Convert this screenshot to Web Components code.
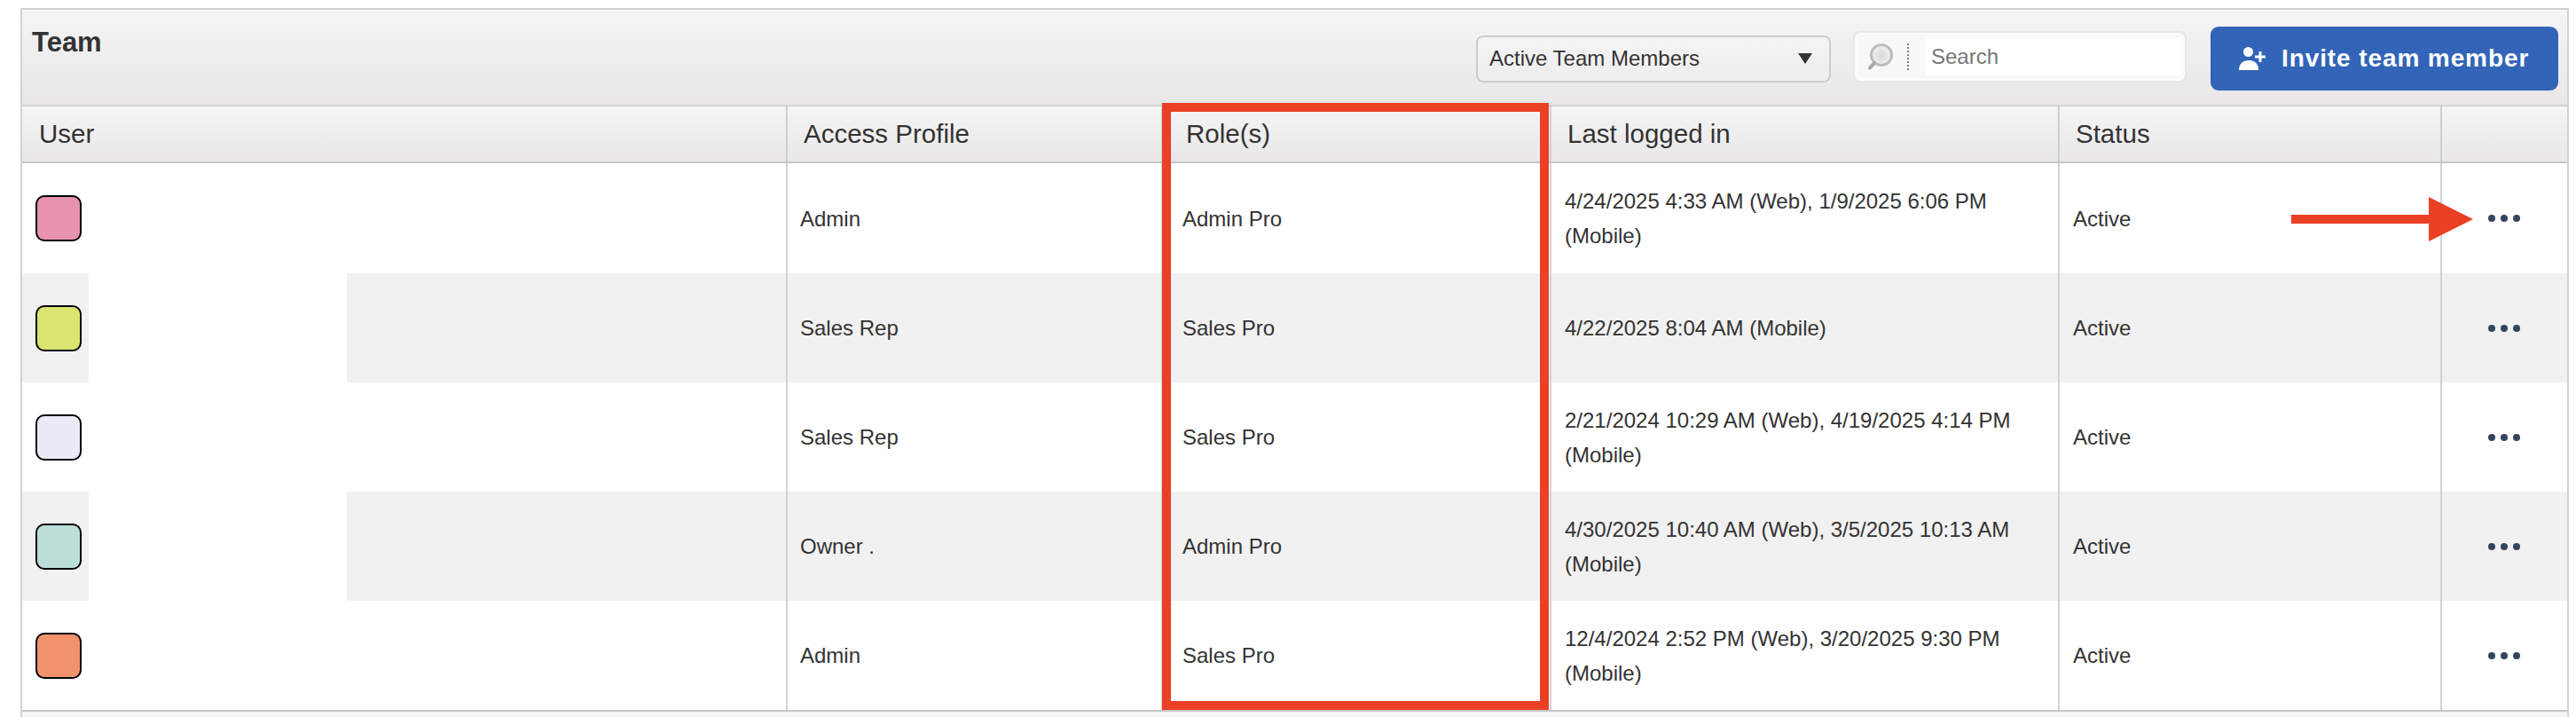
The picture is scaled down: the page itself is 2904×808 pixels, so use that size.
<!DOCTYPE html>
<html>
<head>
<meta charset="utf-8">
<title>Team</title>
<style>
	html, body { margin: 0; background: #ffffff; }
	body {
		padding: 9px 8px 0 23px;
		height: 799px;
		overflow: hidden;
		font-family: "Liberation Sans", Arial, sans-serif;
		color: #333333;
	}
	team-head + team-row { height: 124px; }
</style>
</head>
<body>
<team-panel>
	<span slot="title">Team</span>
	<member-select slot="tools">Active Team Members</member-select>
	<search-box slot="tools"></search-box>
	<invite-button slot="tools">Invite team member</invite-button>

	<team-head></team-head>
	<team-row swatch="#e893ae" access="Admin" role-name="Admin Pro" last="4/24/2025 4:33 AM (Web), 1/9/2025 6:06 PM (Mobile)"></team-row>
	<team-row swatch="#dae46f" access="Sales Rep" role-name="Sales Pro" last="4/22/2025 8:04 AM (Mobile)" alt></team-row>
	<team-row swatch="#e9ebf6" access="Sales Rep" role-name="Sales Pro" last="2/21/2024 10:29 AM (Web), 4/19/2025 4:14 PM (Mobile)"></team-row>
	<team-row swatch="#bcded9" access="Owner ." role-name="Admin Pro" last="4/30/2025 10:40 AM (Web), 3/5/2025 10:13 AM (Mobile)" alt></team-row>
	<team-row swatch="#f2926d" access="Admin" role-name="Sales Pro" last="12/4/2024 2:52 PM (Web), 3/20/2025 9:30 PM (Mobile)"></team-row>

	<mark-box slot="marks"></mark-box>
	<mark-arrow slot="marks"></mark-arrow>
</team-panel>

<script>
const COLUMNS = '863px 423px 438px 573px 431px 141px';

class TeamPanel extends HTMLElement {
	constructor() {
		super();
		this.attachShadow({ mode: 'open' });
		this.shadowRoot.innerHTML = `
<style>
	:host {
		display: block;
		position: relative;
		box-sizing: border-box;
		width: 2873px;
		height: 799px;
		border: solid #d2d2d2;
		border-width: 2px 2px 0 2px;
		background: #f4f4f4;
	}
	.bar {
		display: flex;
		align-items: flex-start;
		box-sizing: border-box;
		height: 109px;
		padding: 19px 10px 0 11px;
		background: linear-gradient(#f5f5f5, #e9e7e8);
		border-bottom: 2px solid #d2d2d2;
	}
	.title {
		font-size: 31px;
		font-weight: bold;
		line-height: 36px;
		color: #333333;
	}
	.tools {
		display: flex;
		align-items: center;
		margin-left: auto;
		height: 72px;
	}
	.rows {
		border-bottom: 2px solid #c6c6c6;
	}
</style>
<div class="bar">
	<div class="title"><slot name="title"></slot></div>
	<div class="tools"><slot name="tools"></slot></div>
</div>
<div class="rows"><slot></slot></div>
<slot name="marks"></slot>`;
	}
}

class MemberSelect extends HTMLElement {
	constructor() {
		super();
		this.attachShadow({ mode: 'open' });
		this.shadowRoot.innerHTML = `
<style>
	:host {
		display: flex;
		align-items: center;
		justify-content: space-between;
		box-sizing: border-box;
		width: 400px;
		height: 53px;
		padding: 0 19px 0 13px;
		border: 2px solid #cccccc;
		border-radius: 8px;
		background: linear-gradient(#f4f4f4, #eeeded);
		font-size: 24px;
		color: #333333;
	}
	svg { display: block; }
</style>
<slot></slot>
<svg width="16" height="12" viewBox="0 0 16 12"><path d="M0 0H16L8 12Z" fill="#333333"/></svg>`;
	}
}

class SearchBox extends HTMLElement {
	constructor() {
		super();
		this.attachShadow({ mode: 'open' });
		this.shadowRoot.innerHTML = `
<style>
	:host {
		display: flex;
		align-items: center;
		box-sizing: border-box;
		width: 376px;
		height: 58px;
		margin: -5px 27px 0 25px;
		border: 2px solid #e9e8e8;
		border-radius: 8px;
		background: #f8f8f8;
		box-shadow: inset 0 0 0 3px #fbfbfb;
	}
	svg { display: block; margin-left: 14px; flex: none; }
	.sep {
		width: 0;
		height: 30px;
		margin-left: 15px;
		border-left: 2px dotted #7f7f7f;
	}
	.field {
		flex: 1;
		align-self: stretch;
		margin: 6px 3px 6px 19px;
		padding-left: 6px;
		background: #ffffff;
		font-size: 24px;
		line-height: 42px;
		color: #777777;
	}
</style>
<svg width="30" height="30" viewBox="0 0 30 30">
	<defs>
		<radialGradient id="lens">
			<stop offset="0" stop-color="#d6d6d6"/>
			<stop offset="1" stop-color="#f3f3f3"/>
		</radialGradient>
	</defs>
	<circle cx="16" cy="13" r="11.5" fill="url(#lens)" stroke="#bdbdbd" stroke-width="3"/>
	<path d="M8 22L3 27.5" stroke="#a8a8a8" stroke-width="4" stroke-linecap="round"/>
</svg>
<span class="sep"></span>
<span class="field">Search</span>`;
	}
}

class InviteButton extends HTMLElement {
	constructor() {
		super();
		this.attachShadow({ mode: 'open' });
		this.shadowRoot.innerHTML = `
<style>
	:host {
		display: flex;
		align-items: center;
		box-sizing: border-box;
		width: 392px;
		height: 72px;
		padding-left: 32px;
		border-radius: 9px;
		background: #3264b8;
		color: #ffffff;
		font-size: 28px;
		font-weight: bold;
		letter-spacing: 0.9px;
	}
	svg { display: block; margin-right: 18px; flex: none; }
</style>
<svg width="30" height="26" viewBox="0 0 30 26" fill="#ffffff">
	<circle cx="10.5" cy="5.5" r="5.5"/>
	<path d="M0 26C0 19 4 15 11 15C18 15 22 19 22 26Z"/>
	<path d="M22.5 9.5H18V12.5H22.5V17H25.5V12.5H30V9.5H25.5V5H22.5Z"/>
</svg>
<slot></slot>`;
	}
}

class TeamHead extends HTMLElement {
	constructor() {
		super();
		this.attachShadow({ mode: 'open' });
		this.shadowRoot.innerHTML = `
<style>
	:host {
		display: grid;
		grid-template-columns: ${COLUMNS};
		height: 64px;
		box-sizing: border-box;
		border-bottom: 2px solid #c6c6c6;
		background: linear-gradient(#f5f5f5, #e9e7e8);
		font-size: 29.5px;
		color: #333333;
	}
	div {
		box-sizing: border-box;
		padding-left: 18px;
		line-height: 62px;
		border-right: 2px solid #cfcfcf;
	}
	div:first-of-type { padding-left: 19px; }
	div:nth-of-type(3) { padding-left: 26px; }
	div:last-child { border-right: 0; }
</style>
<div>User</div><div>Access Profile</div><div>Role(s)</div><div>Last logged in</div><div>Status</div><div></div>`;
	}
}

const rowTemplate = document.createElement('template');
rowTemplate.innerHTML = `
<style>
	:host {
		display: grid;
		grid-template-columns: ${COLUMNS};
		height: 123px;
		background: #ffffff;
		font-size: 24px;
		line-height: 39px;
		color: #333333;
	}
	:host([alt]) { background: #f1f1f1; }
	.cell {
		display: flex;
		align-items: center;
		box-sizing: border-box;
		padding: 0 15px;
		border-right: 2px solid #d2d2d2;
	}
	.access { padding-left: 14px; }
	.role { padding-left: 22px; }
	.user { padding: 0; align-items: stretch; }
	.thumb {
		display: flex;
		align-items: center;
		flex: none;
		box-sizing: border-box;
		width: 75px;
		padding-left: 15px;
	}
	.swatch {
		width: 52px;
		height: 52px;
		box-sizing: border-box;
		border: 2px solid #000000;
		border-radius: 10px;
	}
	.blank { width: 291px; flex: none; background: #ffffff; }
	.dots {
		justify-content: flex-start;
		padding-left: 52px;
		border-right: 0;
		gap: 6px;
	}
	.dots i {
		width: 8px;
		height: 8px;
		border-radius: 50%;
		background: #34465f;
	}
</style>
<div class="cell user">
	<div class="thumb"><div class="swatch"></div></div>
	<div class="blank"></div>
</div>
<div class="cell access"></div>
<div class="cell role"></div>
<div class="cell last"></div>
<div class="cell">Active</div>
<div class="cell dots"><i></i><i></i><i></i></div>
`;

class TeamRow extends HTMLElement {
	constructor() {
		super();
		this.attachShadow({ mode: 'open' });
		this.shadowRoot.appendChild(rowTemplate.content.cloneNode(true));
	}

	connectedCallback() {
		this.shadowRoot.querySelector('.swatch').style.background = this.getAttribute('swatch');
		this.shadowRoot.querySelector('.access').textContent = this.getAttribute('access');
		this.shadowRoot.querySelector('.role').textContent = this.getAttribute('role-name');
		this.shadowRoot.querySelector('.last').textContent = this.getAttribute('last');
	}
}

class MarkBox extends HTMLElement {
	constructor() {
		super();
		this.attachShadow({ mode: 'open' });
		this.shadowRoot.innerHTML = `
<style>
	:host {
		position: absolute;
		left: 1285px;
		top: 105px;
		width: 436px;
		height: 684px;
		box-sizing: border-box;
		border: 10px solid #ea4025;
	}
</style>`;
	}
}

class MarkArrow extends HTMLElement {
	constructor() {
		super();
		this.attachShadow({ mode: 'open' });
		this.shadowRoot.innerHTML = `
<style>
	:host {
		position: absolute;
		left: 2558px;
		top: 211px;
		width: 205px;
		height: 50px;
	}
	svg { display: block; }
</style>
<svg width="205" height="50" viewBox="0 0 205 50"><path d="M0 20H155V0L205 25L155 50V30H0Z" fill="#ea4025"/></svg>`;
	}
}

customElements.define('team-panel', TeamPanel);
customElements.define('member-select', MemberSelect);
customElements.define('search-box', SearchBox);
customElements.define('invite-button', InviteButton);
customElements.define('team-head', TeamHead);
customElements.define('team-row', TeamRow);
customElements.define('mark-box', MarkBox);
customElements.define('mark-arrow', MarkArrow);
</script>
</body>
</html>
